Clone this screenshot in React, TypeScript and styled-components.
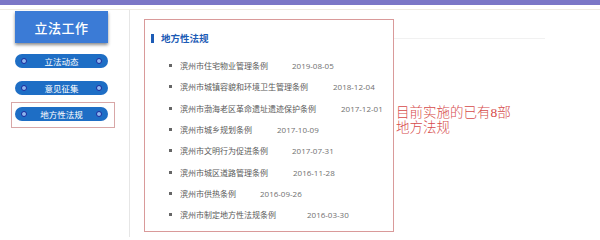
import React from "react";
import styled, { createGlobalStyle } from "styled-components";

const Global = createGlobalStyle`
  html, body {
    margin: 0;
    padding: 0;
    background: #fff;
  }
  body {
    width: 600px;
    height: 237px;
    overflow: hidden;
    font-family: "Noto Sans CJK SC", "Open Sans", sans-serif;
  }
`;

const TopBar = styled.div`
  height: 5px;
  background: #7b77c7;
`;

const TopRule = styled.div`
  height: 1px;
  margin-top: 4px;
  background: #eeebe4;
`;

const Body = styled.div`
  display: flex;
  height: 227px;
`;

const Sidebar = styled.div`
  width: 129px;
  flex: 0 0 129px;
  border-right: 1px solid #e6e6e6;
  padding-top: 1px;
  display: flex;
  flex-direction: column;
  align-items: flex-start;
`;

const SideTitle = styled.div`
  margin-left: 15px;
  width: 93px;
  height: 32px;
  background: #3b7bd6;
  box-shadow: 0 2px 3px rgba(0, 0, 0, 0.45);
  color: #fff;
  font-family: "Liberation Serif", "Noto Sans CJK SC", serif;
  font-size: 13px;
  font-weight: 500;
  letter-spacing: 0.5px;
  display: flex;
  align-items: center;
  justify-content: center;
`;

const NavList = styled.div`
  margin-top: 11px;
  display: flex;
  flex-direction: column;
  align-items: flex-start;
`;

const Pill = styled.div`
  width: 93px;
  height: 14px;
  border-radius: 7px;
  background: #1e6ec5;
  color: #fff;
  font-size: 8.5px;
  line-height: 14px;
  display: flex;
  align-items: center;
  justify-content: space-between;
  padding: 0 6px 0 6px;
  box-sizing: border-box;
`;

const Dot = styled.span`
  width: 4px;
  height: 4px;
  border-radius: 50%;
  background: #8fb6ee;
  border: 1px solid #1a2a9c;
`;

const NavSlot = styled.div<{ $boxed?: boolean }>`
  margin-left: ${(p) => (p.$boxed ? "11px" : "15px")};
  margin-bottom: ${(p) => (p.$boxed ? "0" : "13px")};
  ${(p) =>
    p.$boxed &&
    `
    margin-top: -6px;
    width: 104px;
    box-sizing: border-box;
    border: 1px solid #d8a7a7;
    padding: 4px 0 6px 3px;
  `}
`;

const Main = styled.div`
  flex: 1;
  display: flex;
  align-items: flex-start;
  background: linear-gradient(#f1f1f1, #f1f1f1) no-repeat 20px 28px / 395px 1px;
`;

const LawBox = styled.div`
  margin: 9px 0 0 14px;
  width: 250px;
  height: 213px;
  box-sizing: border-box;
  border: 1px solid #d99a9a;
  background: #fff;
  padding: 13px 0 0 6px;
`;

const Heading = styled.div`
  display: flex;
  align-items: center;
  gap: 7px;
  height: 10px;
  color: #1d5cb6;
  font-size: 9.5px;
  font-weight: bold;
  &::before {
    content: "";
    width: 3px;
    height: 9px;
    background: #1d5cb6;
  }
`;

const List = styled.ul`
  list-style: none;
  margin: 12px 0 0 0;
  padding: 0 0 0 18px;
`;

const Item = styled.li`
  height: 21.3px;
  display: flex;
  align-items: center;
  font-size: 8px;
  color: #5a5a5a;
  &::before {
    content: "";
    width: 3px;
    height: 3px;
    background: #666;
    margin-right: 8px;
  }
`;

const DateText = styled.span<{ $gap: number }>`
  margin-left: ${(p) => p.$gap}px;
  font-family: "Open Sans", sans-serif;
  color: #707070;
`;

const Note = styled.div`
  margin: 95px 0 0 2px;
  color: #d64a4a;
  font-family: "Liberation Serif", "Noto Sans CJK SC", serif;
  font-size: 13.5px;
  line-height: 15px;
  font-weight: 300;
`;

const laws = [
  { title: "滨州市住宅物业管理条例", date: "2019-08-05", gap: 24 },
  { title: "滨州市城镇容貌和环境卫生管理条例", date: "2018-12-04", gap: 25 },
  { title: "滨州市渤海老区革命遗址遗迹保护条例", date: "2017-12-01", gap: 25 },
  { title: "滨州市城乡规划条例", date: "2017-10-09", gap: 25 },
  { title: "滨州市文明行为促进条例", date: "2017-07-31", gap: 24 },
  { title: "滨州市城区道路管理条例", date: "2016-11-28", gap: 25 },
  { title: "滨州市供热条例", date: "2016-09-26", gap: 24 },
  { title: "滨州市制定地方性法规条例", date: "2016-03-30", gap: 31 },
];

const nav = ["立法动态", "意见征集", "地方性法规"];

export default function App() {
  return (
    <>
      <Global />
      <TopBar />
      <TopRule />
      <Body>
        <Sidebar>
          <SideTitle>立法工作</SideTitle>
          <NavList>
            {nav.map((n, i) => (
              <NavSlot key={n} $boxed={i === 2}>
                <Pill>
                  <Dot />
                  <span>{n}</span>
                  <Dot />
                </Pill>
              </NavSlot>
            ))}
          </NavList>
        </Sidebar>
        <Main>
          <LawBox>
            <Heading>地方性法规</Heading>
            <List>
              {laws.map((l) => (
                <Item key={l.title}>
                  {l.title}
                  <DateText $gap={l.gap}>{l.date}</DateText>
                </Item>
              ))}
            </List>
          </LawBox>
          <Note>
            目前实施的已有8部
            <br />
            地方法规
          </Note>
        </Main>
      </Body>
    </>
  );
}
